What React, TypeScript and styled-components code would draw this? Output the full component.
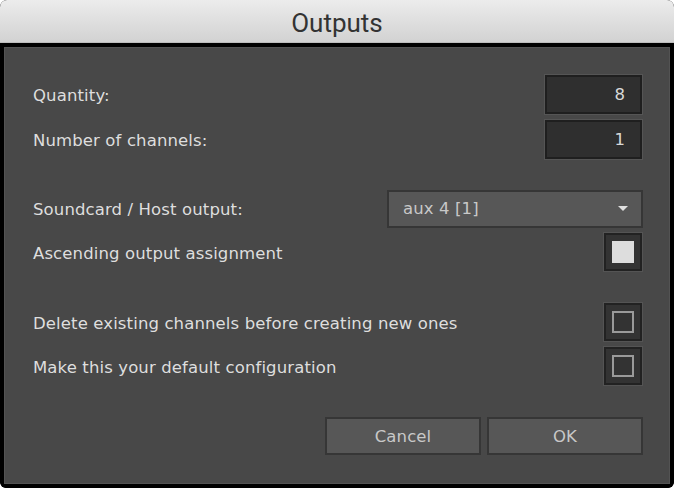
import React from "react";
import styled, { createGlobalStyle } from "styled-components";

const GlobalStyle = createGlobalStyle`
  html, body {
    margin: 0;
    padding: 0;
    background: #ffffff;
  }
  body {
    width: 674px;
    height: 488px;
    overflow: hidden;
  }
`;

const Window = styled.div`
  width: 674px;
  height: 488px;
  display: flex;
  flex-direction: column;
  border-radius: 7px 7px 6px 6px;
  overflow: hidden;
  background: #000;
`;

const TitleBar = styled.div`
  height: 43px;
  flex: none;
  display: flex;
  align-items: center;
  justify-content: center;
  background: linear-gradient(#ececec, #d2d2d2);
  border-bottom: 1px solid #bdbdbd;
  box-sizing: border-box;
  font-family: Roboto, "Liberation Sans", sans-serif;
  font-size: 26px;
  color: #333;
  padding-top: 3px;
`;

const Frame = styled.div`
  flex: 1;
  display: flex;
  padding: 4px;
  background: #000;
  border-radius: 0 0 6px 6px;
`;

const Panel = styled.div`
  flex: 1;
  display: flex;
  flex-direction: column;
  background: #484848;
  border: 1px solid #535353;
  padding: 26px 26px 0 28px;
  font-family: "DejaVu Sans", sans-serif;
  font-size: 16.5px;
  letter-spacing: 0.12px;
  color: #dedede;
`;

const Section = styled.div<{ $top?: number }>`
  display: flex;
  flex-direction: column;
  gap: 4px;
  margin-top: ${(p) => p.$top ?? 0}px;
`;

const Row = styled.div<{ $h: number }>`
  height: ${(p) => p.$h}px;
  display: flex;
  align-items: center;
  justify-content: space-between;
`;

const Label = styled.span`
  white-space: nowrap;
  padding-top: 2px;
`;

const NumberBox = styled.div`
  width: 99px;
  height: 41px;
  box-sizing: border-box;
  border: 1px solid #555;
  display: flex;
`;

const NumberInner = styled.div`
  flex: 1;
  display: flex;
  align-items: center;
  justify-content: flex-end;
  padding-right: 15px;
  background: #2f2f2f;
  border: 2px solid #1f1f1f;
  color: #d8d8d8;
`;

const Select = styled.div`
  width: 256px;
  height: 38px;
  box-sizing: border-box;
  border: 2px solid #363636;
  background: #575757;
  display: flex;
  align-items: center;
  justify-content: space-between;
  padding: 0 13px 0 14px;
  color: #c8c8c8;
`;

const Caret = styled.span`
  width: 0;
  height: 0;
  border-left: 5px solid transparent;
  border-right: 5px solid transparent;
  border-top: 5px solid #e0e0e0;
`;

const CheckFrame = styled.div`
  width: 40px;
  height: 40px;
  box-sizing: border-box;
  border: 1px solid #545454;
  display: flex;
`;

const CheckWell = styled.div`
  flex: 1;
  display: flex;
  align-items: center;
  justify-content: center;
  background: #333;
  border: 2px solid #222;
`;

const Mark = styled.div<{ $on: boolean }>`
  width: 22px;
  height: 22px;
  box-sizing: border-box;
  background: ${(p) => (p.$on ? "#dddddd" : "transparent")};
  border: 2px solid ${(p) => (p.$on ? "#dddddd" : "#9a9a9a")};
`;

const Buttons = styled.div`
  margin-top: 31px;
  display: flex;
  justify-content: flex-end;
  gap: 6px;
`;

const Button = styled.button`
  width: 156px;
  height: 38px;
  box-sizing: border-box;
  border: 2px solid #363636;
  background: #575757;
  color: #c8c8c8;
  font-family: "DejaVu Sans", sans-serif;
  font-size: 16.5px;
  letter-spacing: 0.12px;
  padding: 0;
`;

const Checkbox = ({ on }: { on: boolean }) => (
  <CheckFrame>
    <CheckWell>
      <Mark $on={on} />
    </CheckWell>
  </CheckFrame>
);

export default function App() {
  return (
    <>
      <GlobalStyle />
      <Window>
        <TitleBar>Outputs</TitleBar>
        <Frame>
          <Panel>
            <Section>
              <Row $h={41}>
                <Label>Quantity:</Label>
                <NumberBox>
                  <NumberInner>8</NumberInner>
                </NumberBox>
              </Row>
              <Row $h={41}>
                <Label>Number of channels:</Label>
                <NumberBox>
                  <NumberInner>1</NumberInner>
                </NumberBox>
              </Row>
            </Section>
            <Section $top={29}>
              <Row $h={39}>
                <Label>Soundcard / Host output:</Label>
                <Select>
                  <span>aux 4 [1]</span>
                  <Caret />
                </Select>
              </Row>
              <Row $h={40}>
                <Label>Ascending output assignment</Label>
                <Checkbox on />
              </Row>
            </Section>
            <Section $top={30}>
              <Row $h={40}>
                <Label>Delete existing channels before creating new ones</Label>
                <Checkbox on={false} />
              </Row>
              <Row $h={40}>
                <Label>Make this your default configuration</Label>
                <Checkbox on={false} />
              </Row>
            </Section>
            <Buttons>
              <Button>Cancel</Button>
              <Button>OK</Button>
            </Buttons>
          </Panel>
        </Frame>
      </Window>
    </>
  );
}
